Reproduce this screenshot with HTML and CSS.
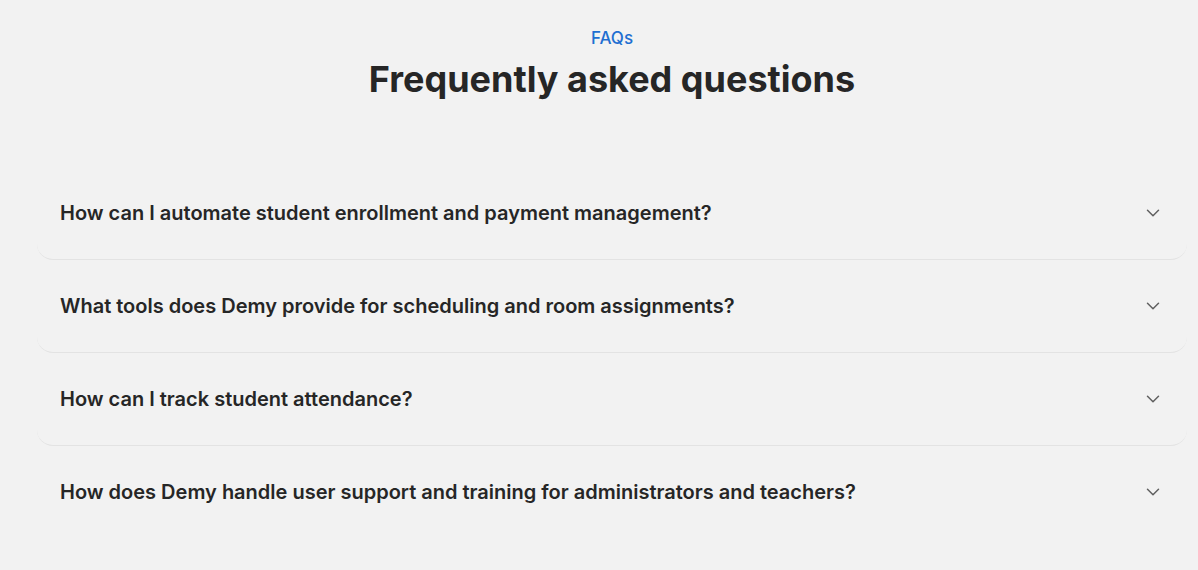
FILE: index.html
```html
<!DOCTYPE html>
<html lang="en">
<head>
<meta charset="utf-8">
<link rel="stylesheet" href="styles.css">
</head>
<body>
<section class="faq">
  <header class="faq-head">
    <p class="eyebrow">FAQs</p>
    <h1 class="title">Frequently asked questions</h1>
  </header>
  <div class="faq-list">
    <div class="faq-item">
      <span class="q">How can I automate student enrollment and payment management?</span>
      <svg class="chev" viewBox="0 0 16 16" width="16" height="16"><path d="M2.5 5.25l5.5 5.5 5.5-5.5" fill="none" stroke="#606060" stroke-width="1.5" stroke-linecap="round" stroke-linejoin="round"/></svg>
    </div>
    <div class="faq-item">
      <span class="q">What tools does Demy provide for scheduling and room assignments?</span>
      <svg class="chev" viewBox="0 0 16 16" width="16" height="16"><path d="M2.5 5.25l5.5 5.5 5.5-5.5" fill="none" stroke="#606060" stroke-width="1.5" stroke-linecap="round" stroke-linejoin="round"/></svg>
    </div>
    <div class="faq-item">
      <span class="q">How can I track student attendance?</span>
      <svg class="chev" viewBox="0 0 16 16" width="16" height="16"><path d="M2.5 5.25l5.5 5.5 5.5-5.5" fill="none" stroke="#606060" stroke-width="1.5" stroke-linecap="round" stroke-linejoin="round"/></svg>
    </div>
    <div class="faq-item last">
      <span class="q">How does Demy handle user support and training for administrators and teachers?</span>
      <svg class="chev" viewBox="0 0 16 16" width="16" height="16"><path d="M2.5 5.25l5.5 5.5 5.5-5.5" fill="none" stroke="#606060" stroke-width="1.5" stroke-linecap="round" stroke-linejoin="round"/></svg>
    </div>
  </div>
</section>
</body>
</html>
```
FILE: styles.css
```css
* { box-sizing: border-box; }
html, body { margin: 0; padding: 0; background: #f2f2f2; }
body {
  font-family: Inter, "Noto Sans", sans-serif;
  color: #262626;
}
.faq {
  width: 1150px;
  margin-left: 37px;
  padding-top: 27px;
}
.faq-head {
  text-align: center;
  display: flex;
  flex-direction: column;
  align-items: center;
}
.eyebrow {
  margin: 0;
  font-size: 17px;
  line-height: 22px;
  font-weight: 500;
  color: #1f6fd1;
}
.title {
  margin: 8px 0 0;
  font-size: 36px;
  line-height: 44px;
  font-weight: 700;
  color: #262626;
}
.faq-list {
  margin-top: 66px;
  display: flex;
  flex-direction: column;
}
.faq-item {
  height: 93px;
  display: flex;
  align-items: center;
  justify-content: space-between;
  padding: 0 26px 0 23px;
  border-bottom: 1px solid #e3e3e3;
  border-radius: 16px;
}
.faq-item.last { border-bottom-color: transparent; }
.q {
  font-size: 20px;
  font-weight: 600;
  color: #262626;
}
.chev { display: block; flex: none; }
```
